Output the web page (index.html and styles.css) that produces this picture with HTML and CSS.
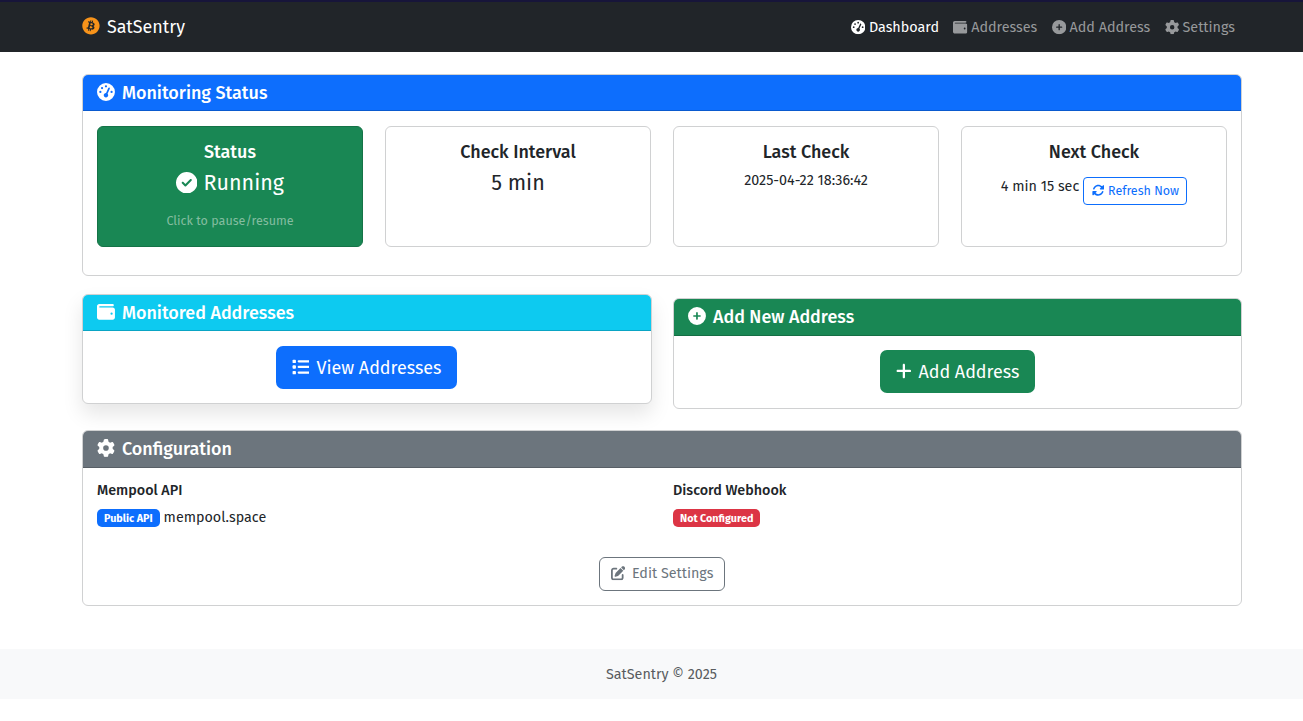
FILE: index.html
```html
<!DOCTYPE html>
<html lang="en">
<head>
<meta charset="utf-8">
<title>SatSentry</title>
<link rel="stylesheet" href="styles.css">
</head>
<body>
<svg class="sprite" aria-hidden="true">
  <symbol id="bitcoin" viewBox="0 0 512 512"><path d="M504 252c0 137-111 248-248 248S8 389 8 252 119 4 256 4s248 111 248 248zm-141.7-35.33c4.937-32.999-20.191-50.739-54.55-62.573l11.146-44.702-27.213-6.781-10.851 43.524c-7.154-1.783-14.502-3.464-21.803-5.13l10.929-43.81-27.198-6.781-11.153 44.686c-5.922-1.349-11.735-2.682-17.377-4.084l.031-.14-37.53-9.37-7.239 29.062s20.191 4.627 19.765 4.913c11.022 2.751 13.014 10.044 12.68 15.825l-12.696 50.925c.76.194 1.744.473 2.829.907-.907-.225-1.876-.473-2.876-.713l-17.796 71.338c-1.349 3.348-4.767 8.37-12.471 6.464.271.395-19.78-4.937-19.78-4.937l-13.51 31.147 35.414 8.827c6.588 1.651 13.045 3.379 19.4 5.006l-11.262 45.213 27.182 6.781 11.153-44.733a1038.209 1038.209 0 0 0 21.687 5.627l-11.115 44.523 27.213 6.781 11.262-45.128c46.404 8.781 81.299 5.239 95.986-36.727 11.834-33.79-.589-53.281-25.004-65.991 17.78-4.098 31.174-15.792 34.747-39.949zm-62.177 87.179c-8.41 33.79-65.308 15.523-83.755 10.943l14.944-59.899c18.446 4.603 77.6 13.717 68.811 48.956zm8.417-87.667c-7.673 30.736-55.031 15.12-70.393 11.292l13.548-54.327c15.363 3.828 64.836 10.973 56.845 43.035z"/></symbol>
  <symbol id="gauge" viewBox="0 0 512 512"><path d="M0 256a256 256 0 1 1 512 0A256 256 0 1 1 0 256zM288 96a32 32 0 1 0 -64 0 32 32 0 1 0 64 0zM256 416c35.3 0 64-28.7 64-64c0-17.4-6.9-33.1-18.1-44.6L366 161.7c5.3-12.1-.2-26.3-12.3-31.6s-26.3 .2-31.6 12.3L257.9 288c-.6 0-1.3 0-1.9 0c-35.3 0-64 28.7-64 64s28.7 64 64 64zM176 144a32 32 0 1 0 -64 0 32 32 0 1 0 64 0zM96 288a32 32 0 1 0 0-64 32 32 0 1 0 0 64zm352-32a32 32 0 1 0 -64 0 32 32 0 1 0 64 0z"/></symbol>
  <symbol id="wallet" viewBox="0 0 512 512"><path d="M64 32C28.7 32 0 60.7 0 96V416c0 35.3 28.7 64 64 64H448c35.3 0 64-28.7 64-64V192c0-35.3-28.7-64-64-64H80c-8.8 0-16-7.2-16-16s7.2-16 16-16H448c17.7 0 32-14.3 32-32s-14.3-32-32-32H64zM416 272a32 32 0 1 1 0 64 32 32 0 1 1 0-64z"/></symbol>
  <symbol id="circle-plus" viewBox="0 0 512 512"><path d="M256 512A256 256 0 1 0 256 0a256 256 0 1 0 0 512zM232 344V280H168c-13.3 0-24-10.7-24-24s10.7-24 24-24h64V168c0-13.3 10.7-24 24-24s24 10.7 24 24v64h64c13.3 0 24 10.7 24 24s-10.7 24-24 24H280v64c0 13.3-10.7 24-24 24s-24-10.7-24-24z"/></symbol>
  <symbol id="gear" viewBox="0 0 512 512"><path d="M495.9 166.6c3.2 8.7 .5 18.4-6.4 24.6l-43.3 39.4c1.1 8.3 1.7 16.8 1.7 25.4s-.6 17.1-1.7 25.4l43.3 39.4c6.9 6.2 9.6 15.9 6.4 24.6c-4.4 11.9-9.7 23.3-15.8 34.3l-4.7 8.1c-6.6 11-14 21.4-22.1 31.2c-5.9 7.2-15.7 9.6-24.5 6.8l-55.7-17.7c-13.4 10.3-28.2 18.9-44 25.4l-12.5 57.1c-2 9.1-9 16.3-18.2 17.8c-13.8 2.3-28 3.5-42.5 3.5s-28.7-1.2-42.5-3.5c-9.2-1.5-16.2-8.7-18.2-17.8l-12.5-57.1c-15.8-6.5-30.6-15.1-44-25.4L83.1 425.9c-8.8 2.8-18.6 .3-24.5-6.8c-8.1-9.8-15.5-20.2-22.1-31.2l-4.7-8.1c-6.1-11-11.4-22.4-15.8-34.3c-3.2-8.7-.5-18.4 6.4-24.6l43.3-39.4C64.6 273.1 64 264.6 64 256s.6-17.1 1.7-25.4L22.4 191.2c-6.9-6.2-9.6-15.9-6.4-24.6c4.4-11.9 9.7-23.3 15.8-34.3l4.7-8.1c6.6-11 14-21.4 22.1-31.2c5.9-7.2 15.7-9.6 24.5-6.8l55.7 17.7c13.4-10.3 28.2-18.9 44-25.4l12.5-57.1c2-9.1 9-16.3 18.2-17.8C227.3 1.2 241.5 0 256 0s28.7 1.2 42.5 3.5c9.2 1.5 16.2 8.7 18.2 17.8l12.5 57.1c15.8 6.5 30.6 15.1 44 25.4l55.7-17.7c8.8-2.8 18.6-.3 24.5 6.8c8.1 9.8 15.5 20.2 22.1 31.2l4.7 8.1c6.1 11 11.4 22.4 15.8 34.3zM256 336a80 80 0 1 0 0-160 80 80 0 1 0 0 160z"/></symbol>
  <symbol id="check" viewBox="0 0 512 512"><path d="M256 512A256 256 0 1 0 256 0a256 256 0 1 0 0 512zM369 209L241 337c-9.4 9.4-24.6 9.4-33.9 0l-64-64c-9.4-9.4-9.4-24.6 0-33.9s24.6-9.4 33.9 0l47 47L335 175c9.4-9.4 24.6-9.4 33.9 0s9.4 24.6 0 33.9z"/></symbol>
  <symbol id="rotate" viewBox="0 0 512 512"><path d="M142.9 142.9c-17.5 17.5-30.1 38-37.8 59.8c-5.9 16.7-24.2 25.4-40.8 19.5s-25.4-24.2-19.5-40.8C55.6 150.7 73.2 122 97.6 97.6c87.2-87.2 228.3-87.5 315.8-1L455 55c6.9-6.9 17.2-8.9 26.2-5.2s14.8 12.5 14.8 22.2l0 128c0 13.3-10.7 24-24 24l-8.4 0L344 224c-9.7 0-18.5-5.8-22.2-14.8s-1.7-19.3 5.2-26.2l41.1-41.1c-62.6-61.5-163.1-61.2-225.3 1zM16 312c0-13.3 10.7-24 24-24l7.6 0 .7 0L168 288c9.7 0 18.5 5.8 22.2 14.8s1.7 19.3-5.2 26.2l-41.1 41.1c62.6 61.5 163.1 61.2 225.3-1c17.5-17.5 30.1-38 37.8-59.8c5.9-16.7 24.2-25.4 40.8-19.5s25.4 24.2 19.5 40.8c-10.8 30.6-28.4 59.3-52.9 83.8c-87.2 87.2-228.3 87.5-315.8 1L57 457c-6.9 6.9-17.2 8.9-26.2 5.2S16 449.7 16 440l0-119.6 0-.7 0-7.6z"/></symbol>
  <symbol id="list" viewBox="0 0 512 512"><rect x="16" y="48" width="96" height="96" rx="24"/><rect x="16" y="208" width="96" height="96" rx="24"/><rect x="16" y="368" width="96" height="96" rx="24"/><rect x="160" y="64" width="352" height="64" rx="32"/><rect x="160" y="224" width="352" height="64" rx="32"/><rect x="160" y="384" width="352" height="64" rx="32"/></symbol>
  <symbol id="plus" viewBox="0 0 448 512"><path d="M256 80c0-17.7-14.3-32-32-32s-32 14.3-32 32V224H48c-17.7 0-32 14.3-32 32s14.3 32 32 32H192V432c0 17.7 14.3 32 32 32s32-14.3 32-32V288H400c17.7 0 32-14.3 32-32s-14.3-32-32-32H256V80z"/></symbol>
  <symbol id="edit" viewBox="0 0 512 512"><path d="M471.6 21.7c-21.9-21.9-57.3-21.9-79.2 0L362.3 51.7l97.9 97.9 30.1-30.1c21.9-21.9 21.9-57.3 0-79.2L471.6 21.7zm-299.2 220c-6.1 6.1-10.8 13.6-13.5 21.9l-29.6 88.8c-2.9 8.6-.6 18.1 5.8 24.6s15.9 8.7 24.6 5.8l88.8-29.6c8.2-2.7 15.7-7.4 21.9-13.5L437.7 172.3 339.7 74.3 172.4 241.7zM96 64C43 64 0 107 0 160V416c0 53 43 96 96 96H352c53 0 96-43 96-96V320c0-17.7-14.3-32-32-32s-32 14.3-32 32v96c0 17.7-14.3 32-32 32H96c-17.7 0-32-14.3-32-32V160c0-17.7 14.3-32 32-32h96c17.7 0 32-14.3 32-32s-14.3-32-32-32H96z"/></symbol>
</svg>

<header class="navbar">
  <a class="brand"><svg class="icon brand-icon"><use href="#bitcoin"/></svg><span class="brand-name">SatSentry</span></a>
  <nav class="nav">
    <a class="nav-link active"><svg class="icon"><use href="#gauge"/></svg><span>Dashboard</span></a>
    <a class="nav-link"><svg class="icon"><use href="#wallet"/></svg><span>Addresses</span></a>
    <a class="nav-link"><svg class="icon"><use href="#circle-plus"/></svg><span>Add Address</span></a>
    <a class="nav-link"><svg class="icon"><use href="#gear"/></svg><span>Settings</span></a>
  </nav>
</header>

<main class="container">
  <section class="card status-card">
    <h5 class="card-header primary"><svg class="icon"><use href="#gauge"/></svg><span>Monitoring Status</span></h5>
    <div class="tiles">
      <div class="tile running">
        <h5 class="tile-title">Status</h5>
        <p class="tile-value"><svg class="icon"><use href="#check"/></svg><span>Running</span></p>
        <small class="hint">Click to pause/resume</small>
      </div>
      <div class="tile">
        <h5 class="tile-title">Check Interval</h5>
        <p class="tile-value"><span>5 min</span></p>
      </div>
      <div class="tile">
        <h5 class="tile-title">Last Check</h5>
        <p class="tile-text"><span class="stamp">2025-04-22 18:36:42</span></p>
      </div>
      <div class="tile">
        <h5 class="tile-title">Next Check</h5>
        <p class="next"><span class="countdown">4 min 15 sec</span><a class="refresh"><svg class="icon"><use href="#rotate"/></svg><span>Refresh Now</span></a></p>
      </div>
    </div>
  </section>

  <div class="pair">
    <section class="card action-card lifted">
      <h5 class="card-header info"><svg class="icon"><use href="#wallet"/></svg><span>Monitored Addresses</span></h5>
      <div class="action"><a class="btn btn-view"><svg class="icon"><use href="#list"/></svg><span>View Addresses</span></a></div>
    </section>
    <section class="card action-card">
      <h5 class="card-header success"><svg class="icon"><use href="#circle-plus"/></svg><span>Add New Address</span></h5>
      <div class="action"><a class="btn btn-add"><svg class="icon plus"><use href="#plus"/></svg><span>Add Address</span></a></div>
    </section>
  </div>

  <section class="card config-card">
    <h5 class="card-header secondary"><svg class="icon"><use href="#gear"/></svg><span>Configuration</span></h5>
    <div class="config">
      <div>
        <h6 class="config-title">Mempool API</h6>
        <p class="config-value"><span class="badge blue">Public API</span><span class="host">mempool.space</span></p>
      </div>
      <div>
        <h6 class="config-title">Discord Webhook</h6>
        <p class="config-value"><span class="badge red">Not Configured</span></p>
      </div>
    </div>
    <div class="edit-row"><a class="edit"><svg class="icon"><use href="#edit"/></svg><span>Edit Settings</span></a></div>
  </section>
</main>

<footer class="footer"><span>SatSentry © 2025</span></footer>
</body>
</html>
```
FILE: styles.css
```css
* { box-sizing: border-box; }
body {
  margin: 0;
  background: #fff;
  color: #212529;
  font: 14.33px/22px "Fira Sans", "Noto Sans", sans-serif;
  white-space: nowrap;
  overflow: hidden;
}
h5, h6, p { margin: 0; }
h5, h6 { font-weight: 500; }
.sprite { display: none; }
.icon { width: 1em; height: 1em; margin-top: -1px; fill: currentColor; flex: none; display: block; }

.navbar {
  height: 52px;
  padding: 0 68px 0 82px;
  display: flex;
  align-items: center;
  justify-content: space-between;
  background: #212529;
  border-top: 2px solid #17153a;
  color: #fff;
}
.brand { display: flex; align-items: center; gap: 7px; font-size: 17.9px; margin-top: -1px; }
.brand-icon { color: #f7931a; }
.nav { display: flex; gap: 14.4px; padding-top: 2px; }
.nav-link { display: flex; align-items: center; gap: 3.5px; color: #97999b; font-size: 14.35px; }
.nav-link.active { color: #fff; }

.container { width: 1160px; margin: 22px 0 0 82px; }
.card { border: 1px solid #d0d1d2; border-radius: 6px; background: #fff; }
.card-header {
  height: 36px;
  padding: 0 14px;
  display: flex;
  align-items: center;
  gap: 7px;
  font-size: 17.95px;
  color: #fff;
  border-radius: 5px 5px 0 0;
  border-bottom: 1px solid rgba(0, 0, 0, .18);
}
.primary { background: #0d6efd; }
.info { background: #0dcaf0; }
.success { height: 37px; padding-bottom: 1px; background: #198754; }
.secondary { height: 37px; padding-bottom: 1px; background: #6c757d; }

.status-card { height: 202px; }
.tiles { display: grid; grid-template-columns: repeat(4, 266px); gap: 22px; padding: 15px 14px; }
.tile { height: 121px; padding: 14px; border: 1px solid #d0d1d2; border-radius: 6px; text-align: center; }
.running { background: #198754; border-color: #157347; color: #fff; }
.tile-title { font-size: 17.95px; line-height: 22px; }
.tile-value { display: flex; justify-content: center; align-items: center; gap: 6px; margin-top: 5px; font-size: 21.5px; line-height: 30px; }
.hint { display: block; margin-top: 13px; font-size: 12.55px; line-height: 20px; color: #84bda0; }
.tile-text { margin-top: 7px; line-height: 22px; }
.next { display: flex; justify-content: center; gap: 4px; margin-top: 14px; line-height: 20px; }
.refresh { display: flex; align-items: center; justify-content: center; gap: 4px; width: 104px; height: 28px; border: 1px solid #0d6efd; border-radius: 4px; color: #0d6efd; font-size: 12.5px; }

.pair { display: grid; grid-template-columns: 570px 569px; gap: 21px; margin-top: 22px; }
.action-card { height: 111px; }
.lifted { height: 110px; transform: translateY(-4px); box-shadow: 0 10px 20px rgba(0, 0, 0, .1); }
.action { display: flex; justify-content: center; padding-top: 14px; }
.lifted .action { padding: 15px 1px 0 0; }
.btn { display: flex; align-items: center; justify-content: center; gap: 7px; height: 43px; border-radius: 7px; color: #fff; font-size: 17.95px; }
.btn-view { width: 181px; background: #0d6efd; }
.btn-add { width: 155px; background: #198754; }
.plus { width: .875em; }

.config-card { position: relative; height: 176px; margin-top: 21px; }
.config { display: grid; grid-template-columns: 576px 1fr; padding: 13px 14px 0; }
.config-title { font-size: 14.33px; line-height: 20px; }
.config-value { display: flex; align-items: center; gap: 4px; height: 22px; margin-top: 6px; }
.badge { height: 18px; padding: 0 7px; border-radius: 5px; color: #fff; font-size: 10.75px; font-weight: 700; line-height: 19px; }
.blue { background: #0d6efd; }
.red { background: #dc3545; }
.edit-row { display: flex; justify-content: center; margin-top: 28px; }
.edit { display: flex; align-items: center; justify-content: center; gap: 7px; width: 126px; height: 34px; border: 1px solid #6c757d; border-radius: 6px; color: #6c757d; font-size: 14.35px; }

.footer { height: 50px; margin-top: 43px; padding: 1px 0 0 606px; line-height: 50px; background: #f8f9fa; color: #595c5f; }
```
